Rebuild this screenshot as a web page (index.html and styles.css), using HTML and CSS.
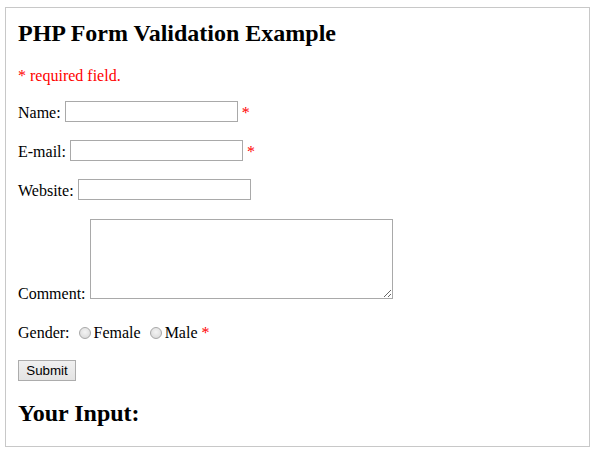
FILE: index.html
```html
<!DOCTYPE html>
<html>
<head>
<meta charset="utf-8">
<link rel="stylesheet" href="styles.css">
</head>
<body>
<div class="frame">
  <h2 class="title">PHP Form Validation Example</h2>
  <p class="error note">* required field.</p>
  <form class="form">
    <p class="row">Name: <input class="text" type="text"> <span class="error">*</span></p>
    <p class="row">E-mail: <input class="text" type="text"> <span class="error">*</span></p>
    <p class="row">Website: <input class="text" type="text"></p>
    <p class="row">Comment: <textarea class="area"></textarea></p>
    <p class="row">Gender: <input class="radio" type="radio" name="g">Female <input class="radio" type="radio" name="g">Male <span class="error">*</span></p>
    <p class="row"><button class="submit" type="button">Submit</button></p>
  </form>
  <h2 class="title title-last">Your Input:</h2>
</div>
</body>
</html>
```
FILE: styles.css
```css
html, body {
  margin: 0;
  padding: 0;
  background: #fff;
}
body {
  font-family: "Liberation Serif", "Times New Roman", serif;
  font-size: 16px;
  color: #000;
}
.frame {
  margin: 7px 0 0 5px;
  width: 585px;
  height: 440px;
  box-sizing: border-box;
  border: 1px solid #c8c8c8;
  padding: 11px 12px 0 12px;
}
.title {
  font-size: 24px;
  font-weight: bold;
  margin: 0 0 20px 0;
  line-height: 28px;
}
.title-last {
  margin-top: 16px;
}
.error {
  color: #ff0000;
}
p {
  margin: 16px 0;
  line-height: 18px;
}
.note {
  margin: 0 0 15px 0;
}
.form {
  margin: 0;
}
.row {
  line-height: 23px;
  margin: 16px 0;
}
.text {
  box-sizing: border-box;
  width: 173px;
  height: 21px;
  border: 1px solid #a9a9a9;
  padding: 1px 2px;
  margin: 0;
  font: 13.33px "Liberation Sans", Arial, sans-serif;
  vertical-align: 2px;
  background: #fff;
}
.area {
  box-sizing: border-box;
  width: 303px;
  height: 80px;
  border: 1px solid #a9a9a9;
  margin: 1px 0 0 0;
  padding: 2px;
  font: 13.33px "Liberation Mono", monospace;
  vertical-align: baseline;
}
.radio {
  appearance: none;
  -webkit-appearance: none;
  width: 12px;
  height: 12px;
  border-radius: 50%;
  border: 1px solid #a8a8a8;
  background: radial-gradient(circle at 50% 40%, #f4f4f4 0%, #e2e2e2 60%, #cfcfcf 100%);
  margin: 0 3px 0 5px;
  box-sizing: border-box;
  vertical-align: -1px;
}
.submit {
  appearance: none;
  -webkit-appearance: none;
  box-sizing: border-box;
  height: 21px;
  width: 58px;
  padding: 0;
  margin: 0;
  border: 1px solid #acacac;
  border-radius: 0;
  background: linear-gradient(#f0f0f0, #e3e3e3);
  font: 13.33px "Liberation Sans", Arial, sans-serif;
  color: #000;
  vertical-align: 2px;
}
```
